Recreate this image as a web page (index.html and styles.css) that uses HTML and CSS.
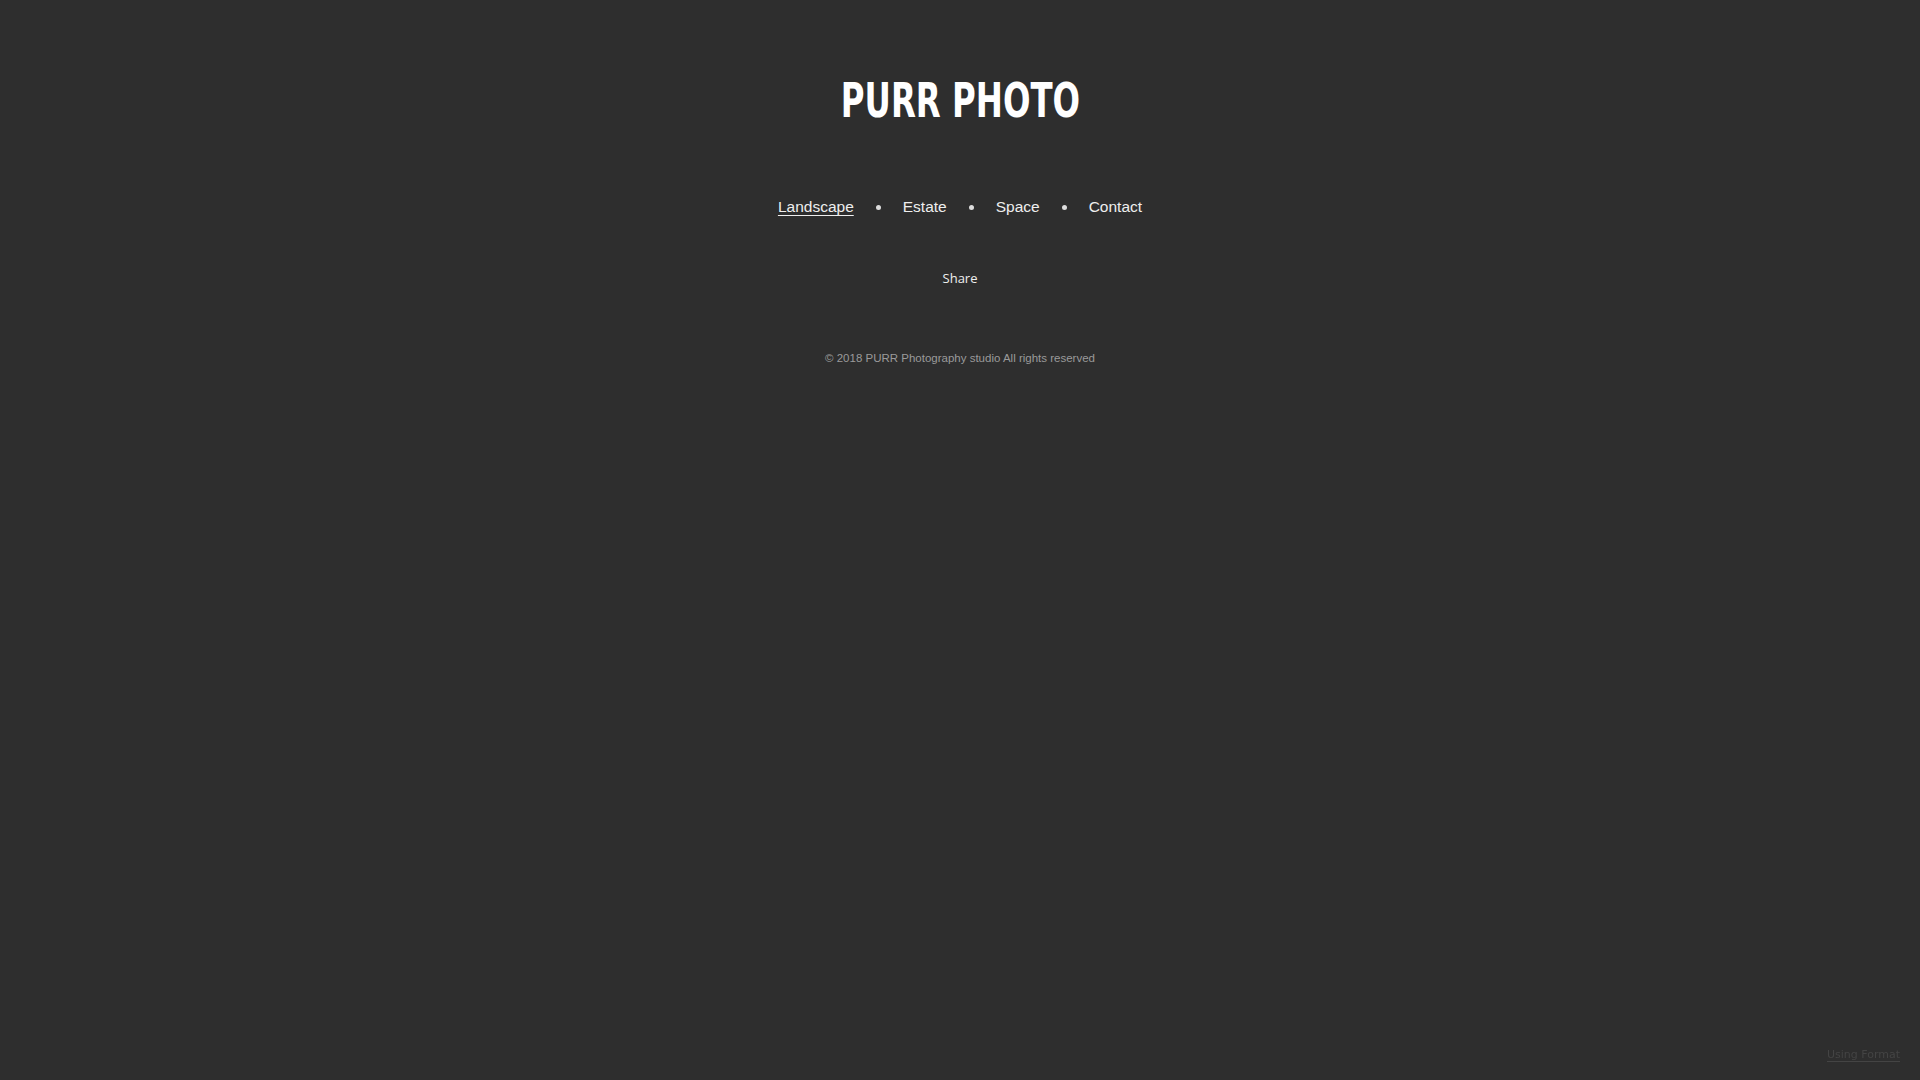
FILE: index.html
```html
<!DOCTYPE html>
<html>
<head>
<meta charset="utf-8">
<link rel="stylesheet" href="styles.css">
</head>
<body>
<div class="page">
  <header class="header">
    <h1 class="title">PURR PHOTO</h1>
    <nav class="nav">
      <a class="nav-link active" href="#">Landscape</a>
      <span class="dot"></span>
      <a class="nav-link" href="#">Estate</a>
      <span class="dot"></span>
      <a class="nav-link" href="#">Space</a>
      <span class="dot"></span>
      <a class="nav-link" href="#">Contact</a>
    </nav>
  </header>
  <div class="share">Share</div>
  <footer class="footer">© 2018 PURR Photography studio All rights reserved</footer>
</div>
<a class="format" href="#">Using Format</a>
</body>
</html>
```
FILE: styles.css
```css
html, body {
  margin: 0;
  padding: 0;
  background: #2e2e2e;
  height: 100%;
}
body {
  font-family: "Liberation Sans", sans-serif;
  color: #eeeeee;
}
.page {
  display: flex;
  flex-direction: column;
  align-items: center;
}
.header {
  display: flex;
  flex-direction: column;
  align-items: center;
}
.title {
  margin: 76px 0 0 0;
  font-family: "DejaVu Sans Condensed", "DejaVu Sans", sans-serif;
  font-stretch: condensed;
  font-weight: bold;
  font-size: 48px;
  line-height: 48px;
  color: #ffffff;
  transform: scaleX(0.75);
  white-space: nowrap;
}
.nav {
  display: flex;
  align-items: center;
  margin-top: 73px;
}
.nav-link {
  font-family: "Liberation Sans", sans-serif;
  font-size: 15.5px;
  line-height: 20px;
  color: #eeeeee;
  text-decoration: none;
}
.nav-link.active {
  text-decoration: underline;
  text-underline-offset: 3px;
}
.dot {
  width: 5px;
  height: 5px;
  border-radius: 50%;
  background: #dddddd;
  margin: 0 22px;
}
.share {
  margin-top: 52px;
  font-family: "Open Sans", sans-serif;
  font-size: 13px;
  line-height: 18px;
  color: #eeeeee;
}
.footer {
  margin-top: 64px;
  font-family: "Liberation Sans", sans-serif;
  font-size: 11.5px;
  line-height: 14px;
  color: #9a9a9a;
}
.format {
  position: fixed;
  right: 20px;
  bottom: 18px;
  font-family: "DejaVu Sans", sans-serif;
  font-size: 11px;
  color: #444444;
  text-decoration: none;
  border-bottom: 1px solid #444444;
  line-height: 13px;
}
```
